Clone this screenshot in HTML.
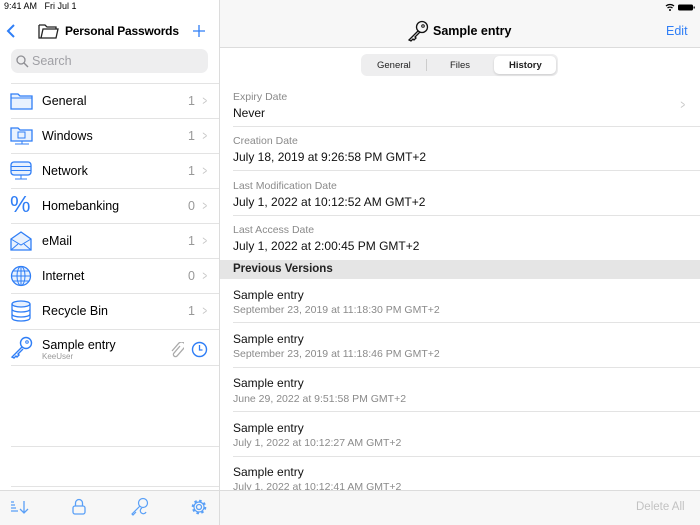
<!DOCTYPE html>
<html><head><meta charset="utf-8"><style>
*{margin:0;padding:0;box-sizing:border-box}
body{width:700px;height:525px;overflow:hidden;background:#fff;font-family:"Liberation Sans",sans-serif;position:relative;color:#000}
.a{position:absolute}
.t{font-size:12px;white-space:nowrap}
.sep{position:absolute;height:1px;background:#e3e3e3}
.lrow{position:absolute;left:0;width:219px;height:35px}
.lrow .n{position:absolute;left:42px;top:10px;font-size:12.5px}
.lrow .c{position:absolute;left:188px;top:10px;font-size:12.5px;color:#999}
.lrow .ch{position:absolute;left:201px;top:9px;font-size:13px;color:#c4c4c4;transform:scaleX(.6)}
.lrow svg{position:absolute;left:10px;top:6px}
.rl{position:absolute;left:233px;font-size:10.5px;color:#8a8a8a}
.rv{position:absolute;left:233px;font-size:12px;color:#111}
.pt{position:absolute;left:233px;font-size:12px;color:#111}
.ps{position:absolute;left:233px;font-size:10.5px;color:#8a8a8a}
</style></head><body>
<div class="a" style="left:219px;top:0;width:481px;height:48px;background:#f7f7f7;border-bottom:1px solid #dcdcdc"></div>
<div class="a" style="left:219px;top:0;width:1px;height:525px;background:#dcdcdc"></div>
<div class="a t" style="left:4px;top:1px;font-size:9px">9:41 AM&nbsp;&nbsp;&nbsp;Fri Jul 1</div>
<svg class="a" style="left:664px;top:3px" width="32" height="9"><path d="M2 3a6 6 0 0 1 8 0M3.5 5a4 4 0 0 1 5 0" stroke="#000" stroke-width="1.3" fill="none"/><circle cx="6" cy="7" r="1" fill="#000"/><rect x="14" y="1.5" width="15" height="6" rx="1.5" fill="#000"/><rect x="29.5" y="3.5" width="1.3" height="2" fill="#000"/></svg>
<svg class="a" style="left:6px;top:23px" width="10" height="16"><path d="M8 2L2 8l6 6" stroke="#2f7ef6" stroke-width="2" fill="none"/></svg>
<svg class="a" style="left:38px;top:22px" width="22" height="18"><path d="M1 3h6l2 2h9v2M1 3v13h17l2-9H5L3 16" stroke="#222" stroke-width="1.3" fill="none"/></svg>
<div class="a" style="left:65px;top:24px;font-size:12px;font-weight:bold;letter-spacing:-0.2px">Personal Passwords</div>
<svg class="a" style="left:193px;top:25px" width="12" height="12"><path d="M6 0v12M0 6h12" stroke="#2f7ef6" stroke-width="1.3"/></svg>
<div class="a" style="left:11px;top:49px;width:197px;height:24px;background:#eeeeef;border-radius:7px"></div>
<svg class="a" style="left:16px;top:55px" width="13" height="13"><circle cx="5" cy="5" r="4" stroke="#8e8e93" stroke-width="1.3" fill="none"/><path d="M8 8l4 4" stroke="#8e8e93" stroke-width="1.4"/></svg>
<div class="a" style="left:32px;top:54px;font-size:12.5px;color:#a0a0a5">Search</div>
<div class="sep" style="left:11px;top:83px;width:208px"></div>

<div class="lrow" style="top:84px"><svg width="24" height="22"><path d="M1 4h7l2 2h12v13H1z" stroke="#2f7ef6" stroke-width="1.3" fill="#e8f1fe"/><path d="M1 8h21" stroke="#2f7ef6"/></svg><span class="n">General</span><span class="c">1</span><span class="ch">&gt;</span></div>
<div class="sep" style="left:11px;top:118px;width:208px"></div>
<div class="lrow" style="top:119px"><svg width="24" height="22"><path d="M1 3h7l2 2h12v11H1z" stroke="#2f7ef6" stroke-width="1.3" fill="#e8f1fe"/><rect x="8" y="7" width="7" height="6" stroke="#2f7ef6" fill="none"/><path d="M5 19h14M12 16v3" stroke="#2f7ef6"/></svg><span class="n">Windows</span><span class="c">1</span><span class="ch">&gt;</span></div>
<div class="sep" style="left:11px;top:153px;width:208px"></div>
<div class="lrow" style="top:154px"><svg width="24" height="22"><rect x="1" y="2" width="20" height="13" rx="3" stroke="#2f7ef6" stroke-width="1.3" fill="#e8f1fe"/><path d="M1 6.5h20M1 10.5h20M11 15v4M5 19h12" stroke="#2f7ef6"/></svg><span class="n">Network</span><span class="c">1</span><span class="ch">&gt;</span></div>
<div class="sep" style="left:11px;top:188px;width:208px"></div>
<div class="lrow" style="top:189px"><div class="a" style="left:10px;top:2px;font-size:23px;color:#2f7ef6">%</div><span class="n">Homebanking</span><span class="c">0</span><span class="ch">&gt;</span></div>
<div class="sep" style="left:11px;top:223px;width:208px"></div>
<div class="lrow" style="top:224px"><svg width="24" height="22"><path d="M1 9l10-7 10 7v11H1z" stroke="#2f7ef6" stroke-width="1.3" fill="#e8f1fe"/><path d="M1 9l10 6 10-6M1 20l7-6M21 20l-7-6" stroke="#2f7ef6" fill="none"/></svg><span class="n">eMail</span><span class="c">1</span><span class="ch">&gt;</span></div>
<div class="sep" style="left:11px;top:258px;width:208px"></div>
<div class="lrow" style="top:259px"><svg width="24" height="24"><circle cx="11" cy="11" r="9.5" stroke="#2f7ef6" stroke-width="1.3" fill="#e8f1fe"/><ellipse cx="11" cy="11" rx="4" ry="9.5" stroke="#2f7ef6" fill="none"/><path d="M1.5 11h19M3 6h16M3 16h16M11 1.5v19" stroke="#2f7ef6"/></svg><span class="n">Internet</span><span class="c">0</span><span class="ch">&gt;</span></div>
<div class="sep" style="left:11px;top:293px;width:208px"></div>
<div class="lrow" style="top:294px"><svg width="24" height="24"><ellipse cx="11" cy="4" rx="9" ry="3" stroke="#2f7ef6" stroke-width="1.3" fill="#e8f1fe"/><path d="M2 4v14c0 4 18 4 18 0V4M2 9c0 4 18 4 18 0M2 14c0 4 18 4 18 0" stroke="#2f7ef6" stroke-width="1.3" fill="none"/></svg><span class="n">Recycle Bin</span><span class="c">1</span><span class="ch">&gt;</span></div>
<div class="sep" style="left:11px;top:329px;width:208px"></div>
<svg class="a" style="left:10px;top:336px" width="24" height="24"><circle cx="16" cy="7" r="5.5" stroke="#2f7ef6" stroke-width="1.4" fill="none"/><circle cx="17" cy="6" r="1.3" stroke="#2f7ef6" fill="none"/><path d="M12 11L2 21l2 1 2-2 1 1 2-2-1-1 5-5" stroke="#2f7ef6" stroke-width="1.4" fill="none"/></svg>
<div class="a" style="left:42px;top:338px;font-size:12.5px">Sample entry</div>
<div class="a" style="left:42px;top:352px;font-size:8px;color:#999">KeeUser</div>
<svg class="a" style="left:170px;top:342px" width="14" height="16"><path d="M10 4l-6 7a2 2 0 0 0 3 3l7-8a3.5 3.5 0 0 0-5-5L2 9" stroke="#aaa" stroke-width="1.3" fill="none"/></svg>
<svg class="a" style="left:191px;top:341px" width="17" height="17"><circle cx="8.5" cy="8.5" r="7" stroke="#2f7ef6" stroke-width="1.4" fill="none"/><path d="M8.5 4v5h3" stroke="#2f7ef6" stroke-width="1.3" fill="none"/></svg>
<div class="sep" style="left:11px;top:365px;width:208px"></div>
<div class="sep" style="left:11px;top:446px;width:208px"></div>
<div class="sep" style="left:11px;top:486px;width:208px"></div>
<div class="a" style="left:0;top:490px;width:700px;height:35px;background:#f7f7f7;border-top:1px solid #dcdcdc"></div>
<div class="a" style="left:219px;top:490px;width:1px;height:35px;background:#dcdcdc"></div>
<svg class="a" style="left:10px;top:499px" width="20" height="16"><path d="M1 3h3M1 6h4M1 9h5M1 12h7M14 2v12M10 10l4 4 4-4" stroke="#5aa0f7" stroke-width="1.3" fill="none"/></svg>
<svg class="a" style="left:71px;top:498px" width="16" height="18"><rect x="2" y="8" width="12" height="8" rx="2" stroke="#5aa0f7" stroke-width="1.3" fill="none"/><path d="M4.5 8V5a3.5 3.5 0 0 1 7 0v3" stroke="#5aa0f7" stroke-width="1.3" fill="none"/></svg>
<svg class="a" style="left:130px;top:497px" width="20" height="20"><circle cx="13" cy="6" r="4.5" stroke="#5aa0f7" stroke-width="1.2" fill="none"/><path d="M10 9L2 17l1 1 3-3M12 11a3 3 0 1 0 4 4" stroke="#5aa0f7" stroke-width="1.2" fill="none"/></svg>
<svg class="a" style="left:190px;top:498px" width="18" height="18"><circle cx="9" cy="9" r="2.5" stroke="#5aa0f7" stroke-width="1.3" fill="none"/><circle cx="9" cy="9" r="6" stroke="#5aa0f7" stroke-width="2.6" stroke-dasharray="2.4 2.3" fill="none"/><circle cx="9" cy="9" r="5" stroke="#5aa0f7" stroke-width="1.2" fill="none"/></svg>
<div class="a" style="left:636px;top:501px;font-size:11.5px;color:#c2c2c2">Delete All</div>
<svg class="a" style="left:407px;top:20px" width="22" height="22"><circle cx="15" cy="7" r="5.5" stroke="#111" stroke-width="1.3" fill="none"/><circle cx="16" cy="6" r="1.3" stroke="#111" fill="none"/><path d="M11 11L2 20l2 1 2-2 1 1 2-2-1-1 5-5" stroke="#111" stroke-width="1.3" fill="none"/></svg>
<div class="a" style="left:433px;top:24px;font-size:12.5px;font-weight:bold">Sample entry</div>
<div class="a" style="left:666px;top:24px;font-size:12.5px;color:#2f7ef6">Edit</div>
<div class="a" style="left:361px;top:54px;width:197px;height:22px;background:#eeeeef;border-radius:6px"></div>
<div class="a" style="left:426px;top:59px;width:1px;height:12px;background:#ccc"></div>
<div class="a" style="left:494px;top:56px;width:62px;height:18px;background:#fff;border-radius:5px;box-shadow:0 1px 2px rgba(0,0,0,.15)"></div>
<div class="a" style="left:377px;top:60px;font-size:9.5px;color:#222">General</div>
<div class="a" style="left:450px;top:60px;font-size:9.5px;color:#222">Files</div>
<div class="a" style="left:509px;top:60px;font-size:9.5px;color:#222;font-weight:bold">History</div>
<div class="rl" style="top:91px">Expiry Date</div><div class="rv" style="top:106px">Never</div>
<div class="a" style="left:679px;top:97px;font-size:13px;color:#c4c4c4;transform:scaleX(.6)">&gt;</div>
<div class="sep" style="left:233px;top:126px;width:467px"></div>
<div class="rl" style="top:135px">Creation Date</div><div class="rv" style="top:150px">July 18, 2019 at 9:26:58 PM GMT+2</div>
<div class="sep" style="left:233px;top:170px;width:467px"></div>
<div class="rl" style="top:180px">Last Modification Date</div><div class="rv" style="top:195px">July 1, 2022 at 10:12:52 AM GMT+2</div>
<div class="sep" style="left:233px;top:215px;width:467px"></div>
<div class="rl" style="top:224px">Last Access Date</div><div class="rv" style="top:239px">July 1, 2022 at 2:00:45 PM GMT+2</div>
<div class="a" style="left:220px;top:260px;width:480px;height:19px;background:#e5e5e5"></div>
<div class="a" style="left:233px;top:263px;font-size:11.5px;font-weight:bold;color:#222">Previous Versions</div>
<div class="pt" style="top:288px">Sample entry</div><div class="ps" style="top:304px">September 23, 2019 at 11:18:30 PM GMT+2</div>
<div class="sep" style="left:233px;top:322px;width:467px"></div>
<div class="pt" style="top:332px">Sample entry</div><div class="ps" style="top:348px">September 23, 2019 at 11:18:46 PM GMT+2</div>
<div class="sep" style="left:233px;top:367px;width:467px"></div>
<div class="pt" style="top:376px">Sample entry</div><div class="ps" style="top:393px">June 29, 2022 at 9:51:58 PM GMT+2</div>
<div class="sep" style="left:233px;top:411px;width:467px"></div>
<div class="pt" style="top:421px">Sample entry</div><div class="ps" style="top:437px">July 1, 2022 at 10:12:27 AM GMT+2</div>
<div class="sep" style="left:233px;top:456px;width:467px"></div>
<div class="pt" style="top:465px">Sample entry</div>
<div class="a" style="left:220px;top:480px;width:480px;height:10px;overflow:hidden"><div class="ps" style="left:13px;top:1px">July 1, 2022 at 10:12:41 AM GMT+2</div></div>
</body></html>
